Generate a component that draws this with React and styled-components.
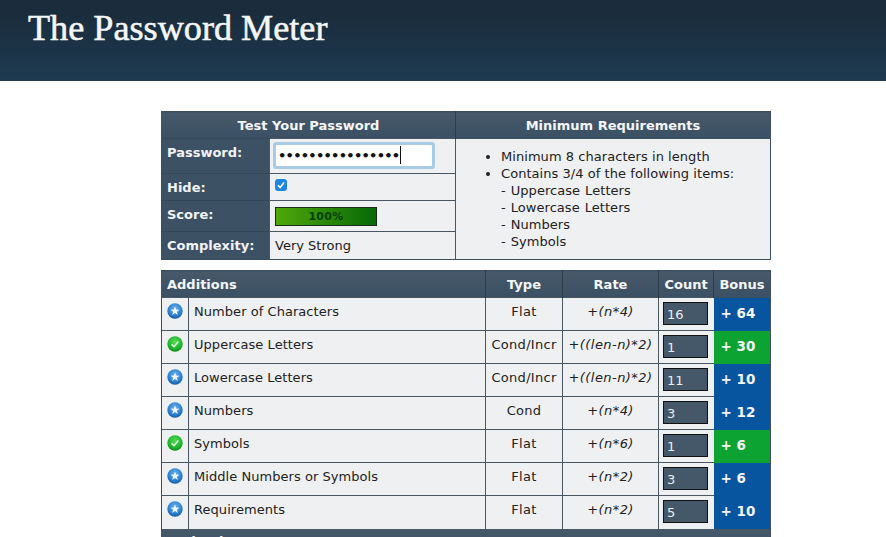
import React from "react";
import styled, { createGlobalStyle } from "styled-components";

const Global = createGlobalStyle`
  html, body { margin: 0; padding: 0; background: #fff; height: 537px; overflow: hidden; }
  body { font-family: "DejaVu Sans", Verdana, sans-serif; color: #1c1c1c; }
`;
const Page = styled.div`width: 886px; height: 537px; overflow: hidden;`;
const Banner = styled.header`
  height: 81px; box-sizing: border-box; padding: 7px 0 0 28px;
  background: linear-gradient(180deg, #1a2b39 0%, #1b3144 50%, #1f3b52 100%);
`;
const Title = styled.h1`
  margin: 0; font: 400 36.2px/42px "Liberation Serif", Georgia, serif; color: #f4f7f7;
  -webkit-text-stroke: 0.55px #f4f7f7;
`;
const Main = styled.main`padding: 30px 0 0 161px; width: 610px;`;
const Table = styled.table`
  width: 610px; margin: 0 0 10px; border-collapse: collapse; table-layout: fixed;
  background: #eff0f1;
  border: 1px solid #3d4d5c;
`;
const Head = styled.th`
  height: 27px; padding: 0 ${p => (p.$pad ? "5px" : "0")};
  box-sizing: border-box; background: linear-gradient(180deg, #47596a, #3b5064);
  color: #f4f6f7; font: 700 13px "DejaVu Sans", Verdana, sans-serif;
  text-align: ${p => p.$align || "center"};
  border-left: 1px solid ${p => (p.$rule ? "#2e3d4a" : "#3f5366")};
`;
const Label = styled.th`
  box-sizing: border-box; height: ${p => p.$h}px; padding: 0 0 ${p => p.$lift || 0}px 5px;
  background: #3d5164; color: #f1f3f4; font: 700 13px "DejaVu Sans", Verdana, sans-serif;
  text-align: left; border-top: 1px solid #35475a;
`;
const Value = styled.td`
  box-sizing: border-box; padding: 0 0 ${p => p.$lift || 0}px 5px; font-size: 13px;
  border-top: 1px solid #4a5763; border-left: 1px solid #4a5763; vertical-align: middle;
`;
const PasswordBox = styled.div`
  width: 156px; height: 21px; margin: 0 0 0 1px; box-sizing: border-box; background: #fff;
  box-shadow: 0 0 0 3px #a9cbe6; border-radius: 1px; padding-left: 2px;
  display: flex; align-items: center; font: 700 13px "DejaVu Sans", sans-serif; letter-spacing: -0.72px; color: #111;
`;
const Caret = styled.span`width: 1px; height: 18px; background: #111; margin-left: 1px;`;
const Check = styled.div`
  width: 12px; height: 12px; border-radius: 3px; background: #1c86e0; display: flex; align-items: center; justify-content: center;
`;
const Meter = styled.div`
  width: 102px; height: 19px; box-sizing: border-box; border: 1px solid #1c2a1c;
  background: linear-gradient(90deg, #4fa80a, #0a6c08 95%);
  display: flex; align-items: center; justify-content: center;
  font: 700 11px "DejaVu Sans", sans-serif; color: #0b3d06; letter-spacing: .3px;
`;
const Requirements = styled.td`
  box-sizing: border-box; padding: 0 0 0 25px; border-left: 1px solid #4a5763; vertical-align: top;
`;
const ReqList = styled.ul`
  margin: 9px 0 0; padding: 0 0 0 20px; font-size: 13px; line-height: 17px; color: #222; letter-spacing: .05px;
`;
const Sub = styled.div`word-spacing: .8px;`;
const IconCell = styled.td`
  box-sizing: border-box; padding: 5px 0 0 5px; vertical-align: top; border-top: 1px solid #4a5763; line-height: 0;
`;
const Name = styled.td`
  box-sizing: border-box; height: 33px; padding: 0 0 5px 5px; font-size: 13px; letter-spacing: .05px; color: #222;
  border-top: 1px solid #4a5763; border-left: 1px solid #4a5763;
`;
const Centered = styled(Name)`
  padding: 0 0 5px; text-align: center; letter-spacing: ${p => (p.$italic ? ".45px" : ".3px")};
  font-style: ${p => (p.$italic ? "italic" : "normal")};
`;
const CountCell = styled.td`
  box-sizing: border-box; padding: 4px 0 0 4px; vertical-align: top;
  border-top: 1px solid #4a5763; border-left: 1px solid #4a5763;
`;
const CountBox = styled.div`
  width: 45px; height: 23px; box-sizing: border-box; border: 1px solid #111; background: #44586a;
  color: #e9eef2; font-size: 13px; padding: 3px 0 0 3px; line-height: 18px;
`;
const Bonus = styled.td`
  box-sizing: border-box; padding: 0 0 2px 7px; color: #f3f6f8; font: 700 13.5px "DejaVu Sans", sans-serif;
  background: ${p => (p.$ok ? "#0da332" : "#07559f")};
`;

const BlueIcon = () => (
  <svg width="16" height="16" viewBox="0 0 16 16">
    <defs>
      <radialGradient id="bl" cx="50%" cy="35%" r="65%">
        <stop offset="0" stopColor="#6db2ea" /><stop offset=".7" stopColor="#2a7fd0" /><stop offset="1" stopColor="#145a9f" />
      </radialGradient>
    </defs>
    <circle cx="8" cy="8" r="7.7" fill="url(#bl)" />
    <path d="M8 3.4 9.2 6.6 12.5 6.7 9.9 8.7 10.8 12 8 10.1 5.2 12 6.1 8.7 3.5 6.7 6.8 6.6Z" fill="#eef6fc" />
  </svg>
);
const GreenIcon = () => (
  <svg width="16" height="16" viewBox="0 0 16 16">
    <defs>
      <radialGradient id="gr" cx="50%" cy="35%" r="65%">
        <stop offset="0" stopColor="#58d85a" /><stop offset=".7" stopColor="#1eb52c" /><stop offset="1" stopColor="#0f8a1c" />
      </radialGradient>
    </defs>
    <circle cx="8" cy="8" r="7.7" fill="url(#gr)" />
    <path d="M4.6 8.2 7 10.6 11.4 5.6" fill="none" stroke="#dff7df" strokeWidth="1.5" />
  </svg>
);

const rows = [
  ["Number of Characters", "Flat", "+(n*4)", "16", "+ 64", false],
  ["Uppercase Letters", "Cond/Incr", "+((len-n)*2)", "1", "+ 30", true],
  ["Lowercase Letters", "Cond/Incr", "+((len-n)*2)", "11", "+ 10", false],
  ["Numbers", "Cond", "+(n*4)", "3", "+ 12", false],
  ["Symbols", "Flat", "+(n*6)", "1", "+ 6", true],
  ["Middle Numbers or Symbols", "Flat", "+(n*2)", "3", "+ 6", false],
  ["Requirements", "Flat", "+(n*2)", "5", "+ 10", false],
];

export default function App() {
  return (
    <Page>
      <Global />
      <Banner><Title>The Password Meter</Title></Banner>
      <Main>
        <Table>
          <colgroup><col style={{ width: 108 }} /><col style={{ width: 186 }} /><col /></colgroup>
          <thead>
            <tr>
              <Head colSpan="2">Test Your Password</Head>
              <Head $rule>Minimum Requirements</Head>
            </tr>
          </thead>
          <tbody>
            <tr>
              <Label $h={35} $lift={8}>Password:</Label>
              <Value $lift={2}>
                <PasswordBox>••••••••••••••••<Caret /></PasswordBox>
              </Value>
              <Requirements rowSpan="4">
                <ReqList>
                  <li>Minimum 8 characters in length</li>
                  <li>Contains 3/4 of the following items:
                    <Sub>- Uppercase Letters</Sub>
                    <Sub>- Lowercase Letters</Sub>
                    <Sub>- Numbers</Sub>
                    <Sub>- Symbols</Sub>
                  </li>
                </ReqList>
              </Requirements>
            </tr>
            <tr>
              <Label $h={27}>Hide:</Label>
              <Value $lift={4}>
                <Check>
                  <svg width="10" height="10" viewBox="0 0 10 10"><path d="M2 5.2 4.2 7.6 8 2.6" fill="none" stroke="#fff" strokeWidth="1.6" /></svg>
                </Check>
              </Value>
            </tr>
            <tr>
              <Label $h={31} $lift={4}>Score:</Label>
              <Value $lift={0}><Meter>100%</Meter></Value>
            </tr>
            <tr>
              <Label $h={28}>Complexity:</Label>
              <Value>Very Strong</Value>
            </tr>
          </tbody>
        </Table>
        <Table>
          <colgroup>
            <col style={{ width: 27 }} /><col style={{ width: 297 }} /><col style={{ width: 77 }} />
            <col style={{ width: 96 }} /><col style={{ width: 55 }} /><col />
          </colgroup>
          <thead>
            <tr>
              <Head colSpan="2" $align="left" $pad>Additions</Head>
              <Head $rule>Type</Head>
              <Head $rule>Rate</Head>
              <Head $rule>Count</Head>
              <Head $rule>Bonus</Head>
            </tr>
          </thead>
          <tbody>
            {rows.map(([name, type, rate, count, bonus, ok]) => (
              <tr key={name}>
                <IconCell>{ok ? <GreenIcon /> : <BlueIcon />}</IconCell>
                <Name>{name}</Name>
                <Centered>{type}</Centered>
                <Centered $italic>{rate}</Centered>
                <CountCell><CountBox>{count}</CountBox></CountCell>
                <Bonus $ok={ok}>{bonus}</Bonus>
              </tr>
            ))}
            <tr>
              <Head colSpan="6" $align="left" $pad>Deductions</Head>
            </tr>
          </tbody>
        </Table>
      </Main>
    </Page>
  );
}
